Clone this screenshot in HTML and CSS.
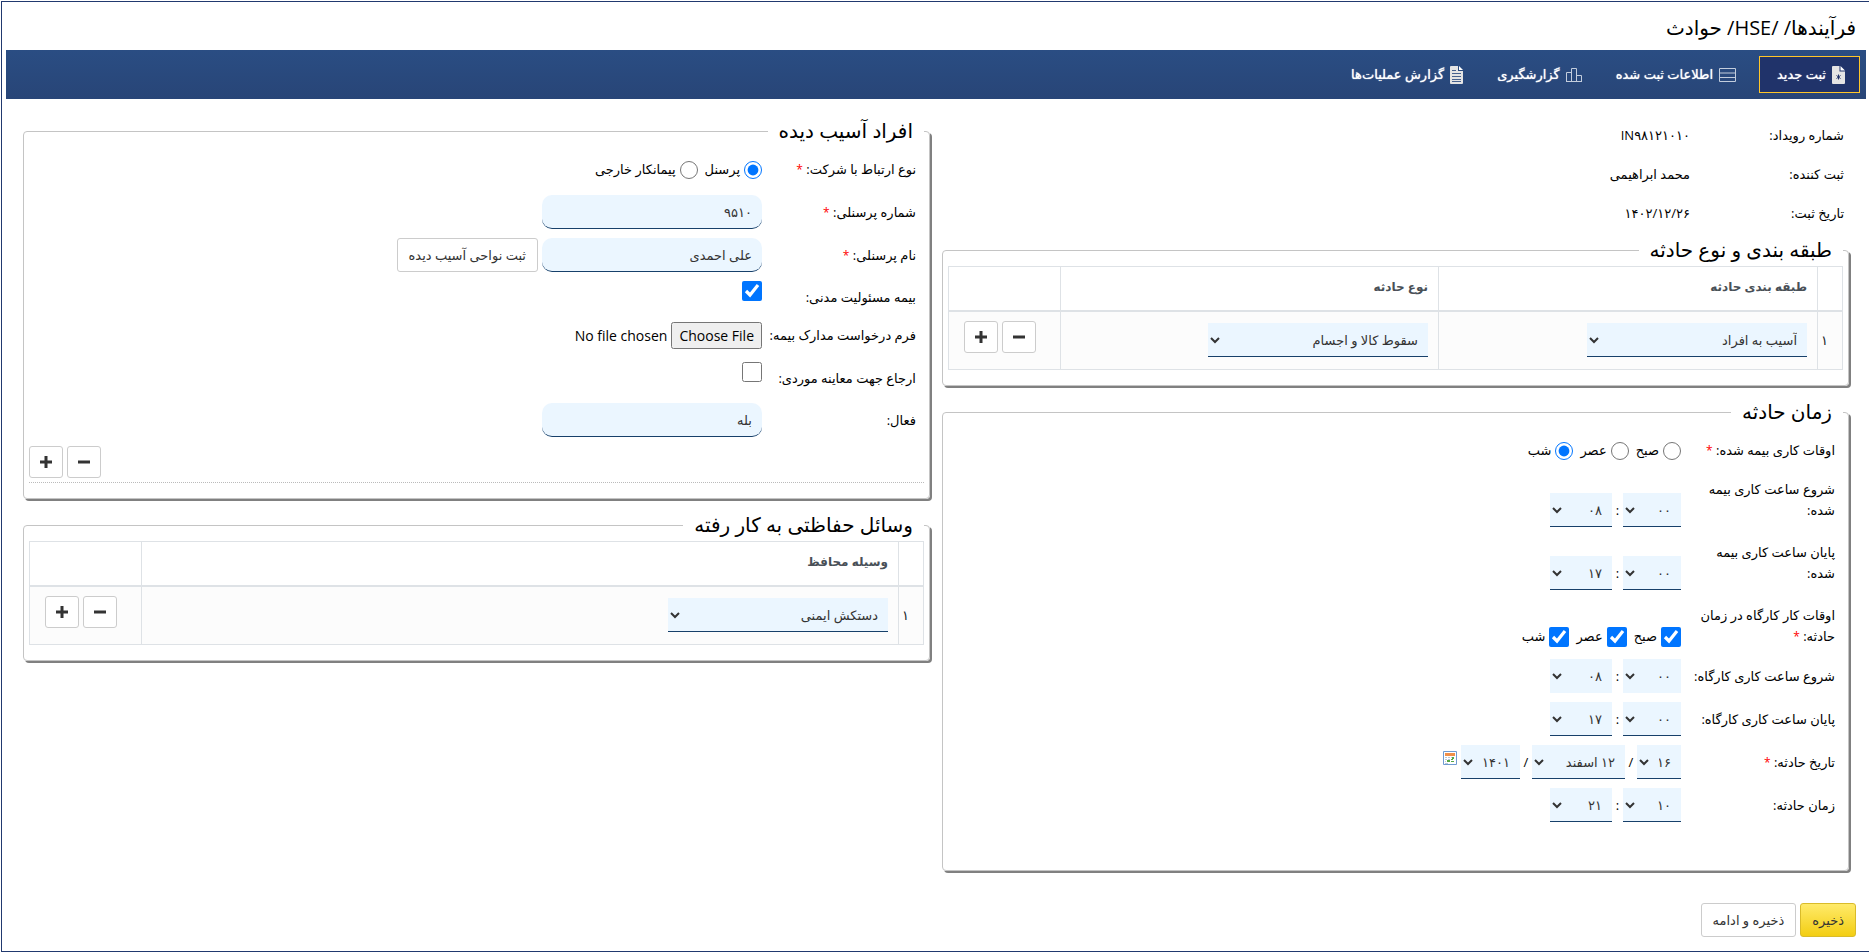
FILE: index.html
```
<!DOCTYPE html>
<html lang="fa" dir="rtl">
<head>
<meta charset="utf-8">
<title>فرآیندها/ HSE/ حوادث</title>
<link rel="stylesheet" href="styles.css">
</head>
<body>
<div class="page">
  <header class="page-header"><h1 class="page-title">فرآیندها/ /HSE/ حوادث</h1></header>

  <nav class="tabs">
    <a class="tab tab-active" href="#new">
      <svg width="13" height="18" viewBox="0 0 13 18"><path fill="#e4e4e4" d="M1 0h6.500v5.500H13V17a1 1 0 0 1-1 1H1a1 1 0 0 1-1-1V1a1 1 0 0 1 1-1z"/><path fill="#fff" d="M8.500 0 13 4.500H8.500z"/><path stroke="#20336a" stroke-width="1" d="M6.500 8.500v5M4.500 9.500l4 3M8.500 9.500l-4 3"/></svg>
      <span>ثبت جدید</span></a>
    <a class="tab" href="#records">
      <svg width="17" height="14" viewBox="0 0 17 14"><path fill="none" stroke="#c3cddd" d="M.5.5h16v13H.5zM.5 5h16M.5 9.500h16"/></svg>
      <span>اطلاعات ثبت شده</span></a>
    <a class="tab" href="#reports">
      <svg width="16" height="14" viewBox="0 0 16 14"><path fill="none" stroke="#c3cddd" d="M.5 13.500v-9h5M5.500 13.500V.5h5v13M10.500 7.500h5v6M0 13.500h16"/></svg>
      <span>گزارشگیری</span></a>
    <a class="tab" href="#operations">
      <svg width="13" height="18" viewBox="0 0 13 18"><path fill="#e4e4e4" d="M1 0h7v5h5v12a1 1 0 0 1-1 1H1a1 1 0 0 1-1-1V1a1 1 0 0 1 1-1z"/><path fill="#fff" d="M9 0l4 4H9z"/><path stroke="#47618e" d="M2 4.500h4M2 7.500h9M2 10.500h9M2 13.500h9M2 15.500h9"/></svg>
      <span>گزارش عملیات‌ها</span></a>
  </nav>

  <form class="content">
    <div class="columns">
      <div class="column">
        <dl class="summary">
          <div class="summary-row"><dt>شماره رویداد:</dt><dd>IN۹۸۱۲۱۰۱۰</dd></div>
          <div class="summary-row"><dt>ثبت کننده:</dt><dd>محمد ابراهیمی</dd></div>
          <div class="summary-row"><dt>تاریخ ثبت:</dt><dd>۱۴۰۲/۱۲/۲۶</dd></div>
        </dl>

        <fieldset class="panel">
          <legend>طبقه بندی و نوع حادثه</legend>
          <table class="grid">
            <colgroup><col class="col-index"><col class="col-main"><col><col class="col-actions"></colgroup>
            <thead><tr><th></th><th>طبقه بندی حادثه</th><th>نوع حادثه</th><th></th></tr></thead>
            <tbody><tr>
              <td class="index">۱</td>
              <td><select class="field wide" aria-label="طبقه بندی حادثه"><option>آسیب به افراد</option></select></td>
              <td><select class="field wide" aria-label="نوع حادثه"><option>سقوط کالا و اجسام</option></select></td>
              <td><div class="actions"><button type="button" class="btn icon-btn" aria-label="حذف"><svg width="12" height="12" viewBox="0 0 12 12"><path d="M0 4.500h12v3H0z"/></svg></button><button type="button" class="btn icon-btn" aria-label="افزودن"><svg width="12" height="12" viewBox="0 0 12 12"><path d="M0 4.500h4.500V0h3v4.500H12v3H7.500V12h-3V7.500H0z"/></svg></button></div></td>
            </tr></tbody>
          </table>
        </fieldset>

        <fieldset class="panel form-panel time-panel">
          <legend>زمان حادثه</legend>
          <div class="row choice-row" role="radiogroup" aria-labelledby="shift">
            <span class="label" id="shift">اوقات کاری بیمه شده: <i class="req">*</i></span>
            <div class="control choices">
              <label><input type="radio" name="shift">صبح</label>
              <label><input type="radio" name="shift">عصر</label>
              <label><input type="radio" name="shift" checked>شب</label>
            </div>
          </div>
          <div class="row tall-row">
            <label class="label" for="s1">شروع ساعت کاری بیمه شده:</label>
            <div class="control"><select class="field minute" id="s1"><option>۰۰</option></select><span class="sep">:</span><select class="field hour" aria-label="ساعت"><option>۰۸</option></select></div>
          </div>
          <div class="row tall-row">
            <label class="label" for="s2">پایان ساعت کاری بیمه شده:</label>
            <div class="control"><select class="field minute" id="s2"><option>۰۰</option></select><span class="sep">:</span><select class="field hour" aria-label="ساعت"><option>۱۷</option></select></div>
          </div>
          <div class="row tall-row tall-choices" role="group" aria-labelledby="work">
            <span class="label" id="work">اوقات کار کارگاه در زمان حادثه: <i class="req">*</i></span>
            <div class="control choices">
              <label><input type="checkbox" checked>صبح</label>
              <label><input type="checkbox" checked>عصر</label>
              <label><input type="checkbox" checked>شب</label>
            </div>
          </div>
          <div class="row">
            <label class="label" for="s3">شروع ساعت کاری کارگاه:</label>
            <div class="control"><select class="field minute plain" id="s3"><option>۰۰</option></select><span class="sep">:</span><select class="field hour plain" aria-label="ساعت"><option>۰۸</option></select></div>
          </div>
          <div class="row">
            <label class="label" for="s4">پایان ساعت کاری کارگاه:</label>
            <div class="control"><select class="field minute" id="s4"><option>۰۰</option></select><span class="sep">:</span><select class="field hour" aria-label="ساعت"><option>۱۷</option></select></div>
          </div>
          <div class="row">
            <label class="label" for="day">تاریخ حادثه: <i class="req">*</i></label>
            <div class="control"><select class="field day" id="day"><option>۱۶</option></select><span class="sep slash">/</span><select class="field month" aria-label="ماه"><option>۱۲ اسفند</option></select><span class="sep slash">/</span><select class="field year" aria-label="سال"><option>۱۴۰۱</option></select>
              <button type="button" class="calendar" aria-label="تقویم"><svg width="14" height="14" viewBox="0 0 14 14"><path fill="#fff" stroke="#6f9bd1" d="M.5.5h13v13H.5z"/><path fill="#f0904a" d="M2 2h10v3H2z"/><path fill="#b9c7d8" d="M2 6h2v1H2zm3 0h2v1H5zm3 0h1v1H8zM2 8h2v1H2zm3 0h2v1H5zM2 10h1v1H2zm0 2h3v1H2z"/><path fill="#56a744" d="M9 6h2v2H9zm-1 2h2v1H8zm-4 1h3v2H4zm4 1h3v1H8z"/></svg></button></div>
          </div>
          <div class="row">
            <label class="label" for="s5">زمان حادثه:</label>
            <div class="control"><select class="field minute" id="s5"><option>۱۰</option></select><span class="sep">:</span><select class="field hour" aria-label="ساعت"><option>۲۱</option></select></div>
          </div>
        </fieldset>
      </div>

      <div class="column">
        <fieldset class="panel form-panel">
          <legend>افراد آسیب دیده</legend>
          <div class="row choice-row" role="radiogroup" aria-labelledby="relation">
            <span class="label" id="relation">نوع ارتباط با شرکت: <i class="req">*</i></span>
            <div class="control choices">
              <label><input type="radio" name="relation" checked>پرسنل</label>
              <label><input type="radio" name="relation">پیمانکار خارجی</label>
            </div>
          </div>
          <div class="row">
            <label class="label" for="code">شماره پرسنلی: <i class="req">*</i></label>
            <div class="control"><input class="field text" id="code" type="text" value="۹۵۱۰"></div>
          </div>
          <div class="row">
            <label class="label" for="name">نام پرسنلی: <i class="req">*</i></label>
            <div class="control near"><input class="field text" id="name" type="text" value="علی احمدی"><button type="button" class="btn">ثبت نواحی آسیب دیده</button></div>
          </div>
          <div class="row check-row">
            <label class="label" for="liability">بیمه مسئولیت مدنی:</label>
            <div class="control"><input type="checkbox" id="liability" checked></div>
          </div>
          <div class="row file-row">
            <label class="label" for="form">فرم درخواست مدارک بیمه:</label>
            <div class="control"><input type="file" class="file" id="form"></div>
          </div>
          <div class="row check-row">
            <label class="label" for="referral">ارجاع جهت معاینه موردی:</label>
            <div class="control"><input type="checkbox" id="referral"></div>
          </div>
          <div class="row">
            <label class="label" for="active">فعال:</label>
            <div class="control"><input class="field text" id="active" type="text" value="بله"></div>
          </div>
          <div class="person-actions"><button type="button" class="btn icon-btn" aria-label="حذف"><svg width="12" height="12" viewBox="0 0 12 12"><path d="M0 4.500h12v3H0z"/></svg></button><button type="button" class="btn icon-btn" aria-label="افزودن"><svg width="12" height="12" viewBox="0 0 12 12"><path d="M0 4.500h4.500V0h3v4.500H12v3H7.500V12h-3V7.500H0z"/></svg></button></div>
        </fieldset>

        <fieldset class="panel">
          <legend>وسائل حفاظتی به کار رفته</legend>
          <table class="grid">
            <colgroup><col class="col-index"><col><col class="col-actions"></colgroup>
            <thead><tr><th></th><th>وسیله محافظ</th><th></th></tr></thead>
            <tbody><tr>
              <td class="index">۱</td>
              <td><select class="field wide" aria-label="وسیله محافظ"><option>دستکش ایمنی</option></select></td>
              <td><div class="actions"><button type="button" class="btn icon-btn" aria-label="حذف"><svg width="12" height="12" viewBox="0 0 12 12"><path d="M0 4.500h12v3H0z"/></svg></button><button type="button" class="btn icon-btn" aria-label="افزودن"><svg width="12" height="12" viewBox="0 0 12 12"><path d="M0 4.500h4.500V0h3v4.500H12v3H7.500V12h-3V7.500H0z"/></svg></button></div></td>
            </tr></tbody>
          </table>
        </fieldset>
      </div>
    </div>

    <footer class="footer">
      <button type="submit" class="btn primary">ذخیره</button>
      <button type="button" class="btn">ذخیره و ادامه</button>
    </footer>
  </form>
</div>
</body>
</html>
```
FILE: styles.css
```
* { box-sizing: border-box; }

body {
  margin: 0;
  padding: 1px 0 0 1px;
  background: #fff;
  color: #212529;
  font-family: "Open Sans", "DejaVu Sans", sans-serif;
  font-size: 13px;
  line-height: 21px;
}

button, input, select { font: inherit; color: inherit; margin: 0; }

.page {
  min-height: calc(100vh - 1px);
  border: 1px solid #21396f;
  border-right: 0;
  display: flex;
  flex-direction: column;
}

.page-header { padding: 4px 13px 0; }

.page-title {
  margin: 0;
  font-size: 20px;
  font-weight: 400;
  line-height: 44px;
  color: #000;
}

.tabs {
  display: flex;
  align-items: center;
  gap: 4px;
  height: 49px;
  margin: 0 3px 0 4px;
  padding: 0 6px;
  background: linear-gradient(#2a4d83, #284577);
}

.tab {
  display: flex;
  align-items: center;
  gap: 6px;
  height: 37px;
  padding: 0 14px;
  border: 1px solid transparent;
  color: #fff;
  text-shadow: 0 0 1px #fff;
  text-decoration: none;
}

.tab-active { min-width: 101px; margin-left: 4px; background: #20336a; border-color: #ffc629; }

.content { padding: 20px 20px 0 21px; }

.columns {
  display: grid;
  grid-template-columns: 1fr 1fr;
  gap: 12px;
}

.column { display: flex; flex-direction: column; min-width: 0; }

.summary {
  display: flex;
  flex-direction: column;
  gap: 6px;
  margin: 0 0 8px;
  padding: 0 5px;
  color: #000;
}
.summary-row { display: flex; line-height: 33px; }
.summary dt { width: 154px; }
.summary dd { margin: 0; }

.panel {
  min-width: 0;
  margin: 0 0 14px;
  padding: 4px 5px 15px;
  border: 1px solid #c4c4c4;
  border-radius: 4px;
  box-shadow: 2px 2px 0 #808080;
}

.panel legend {
  padding: 0 11px;
  color: #000;
  font-size: 20px;
  line-height: 24px;
}

.form-panel { padding-top: 16px; }
.time-panel { padding-bottom: 39px; }

.grid {
  width: 100%;
  table-layout: fixed;
  border-collapse: collapse;
}

.grid th, .grid td { border: 1px solid #dee2e6; padding: 0 10px; text-align: right; }
.grid th { height: 44px; padding-bottom: 3px; border-bottom-width: 2px; color: #495057; font-size: 12px; font-weight: 700; }
.grid td { height: 59px; background: #fcfcfc; }
.grid .index { padding: 0 3px; text-align: left; }
.col-index { width: 25px; }
.col-main { width: 379px; }
.col-actions { width: 112px; }

.field {
  height: 34px;
  padding: 0 6px;
  border: 0;
  border-bottom: 1px solid #17406a;
  border-radius: 0;
  background-color: #ebf6ff;
  color: #333;
}

.wide, .text { width: 220px; }
.text { padding: 0 10px; border-radius: 10px; }
.plain { border-bottom-color: #ebf6ff; }
.minute { width: 58px; }
.hour { width: 62px; }
.day { width: 44px; }
.month { width: 93px; }
.year { width: 59px; }

.row {
  display: flex;
  align-items: center;
  padding: 0 8px;
  margin-bottom: 9px;
  color: #000;
}

.label { flex: 0 0 150px; margin-left: 4px; }
.req { color: #f00; font-size: 12px; font-style: normal; }
.control { display: flex; align-items: center; }
.near { gap: 4px; }
.sep { width: 11px; text-align: center; }
.slash { width: 12px; }

.choice-row { height: 21px; margin-bottom: 15px; }
.time-panel .choice-row { margin-bottom: 18px; }

.tall-row { align-items: flex-end; margin-bottom: 15px; }
.tall-row .label { padding-bottom: 6px; }
.tall-choices { margin-bottom: 6px; }
.tall-choices .choices { padding-bottom: 6px; }

.check-row, .file-row { height: 27px; margin-bottom: 14px; }
.file-row { margin-bottom: 13px; }
.check-row .label { align-self: flex-end; }
.check-row .control { align-self: flex-start; }

.choices { gap: 7px; }
.choices label { display: flex; align-items: center; gap: 4px; }

input[type="radio"] { width: 18px; height: 18px; }
input[type="checkbox"] { width: 20px; height: 20px; }

.calendar { display: flex; margin-right: 4px; margin-bottom: 8px; padding: 0; border: 0; background: none; }

.file { font-size: 14px; }
.file::file-selector-button { height: 27px; font: inherit; }

.btn {
  height: 34px;
  padding: 0 11px;
  border: 1px solid #ccc;
  border-radius: 3px;
  background: #fff;
  color: #333;
}

.icon-btn { width: 34px; height: 32px; padding: 0; line-height: 0; }
.icon-btn svg { fill: #333; }

.primary { background: linear-gradient(#ffea6a, #f3ce13); border-color: #d9bb2a; }

.actions { display: flex; gap: 4px; padding: 0 14px 6px 0; }
.person-actions {
  display: flex;
  justify-content: flex-end;
  gap: 4px;
  padding-bottom: 4px;
  border-bottom: 1px dotted #bbb;
}

.footer { display: flex; gap: 4px; padding: 18px 0 13px; margin-right: -7px; }
```
